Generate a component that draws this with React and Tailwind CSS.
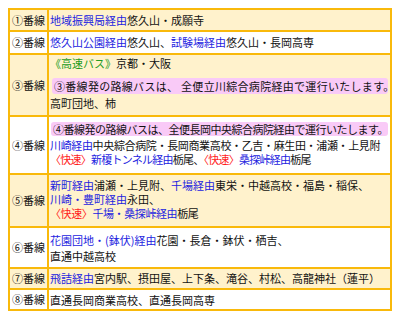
const B = ({ children }) => <span className="text-[#2323e0]">{children}</span>
const R = ({ children }) => <span className="text-[#ff1c1c]">{children}</span>
const G = ({ children }) => <span className="text-[#239b23]">{children}</span>

function Row({ label, yellow, first, height, children }) {
  return (
    <div
      className={`flex ${first ? '' : 'border-t-2'} border-[#f9b90b] ${yellow ? 'bg-[#fff2cc]' : 'bg-white'} ${height}`}
    >
      <div className="w-[39px] shrink-0 border-r-2 border-[#f9b90b] flex items-center pl-[2px] whitespace-nowrap">
        {label}
      </div>
      <div className="flex-1 min-w-0 pl-[1px] whitespace-nowrap">{children}</div>
    </div>
  )
}

export default function App() {
  return (
    <div className="p-2 bg-white min-h-[320px]">
      <div
        className="w-[384px] border-2 border-[#f9b90b] text-[11px] text-[#111]"
        style={{ fontFamily: '"Noto Sans CJK JP", "Noto Sans", sans-serif' }}
      >
        {/* ① */}
        <Row label="①番線" yellow first height="h-[20px]">
          <div className="h-[20px] leading-[20px]">
            <B>地域振興局経由</B>悠久山・成願寺
          </div>
        </Row>

        {/* ② */}
        <Row label="②番線" height="h-[23px]">
          <div className="h-[21px] leading-[21px]">
            <B>悠久山公園経由</B>悠久山、<B>試験場経由</B>悠久山・長岡高専
          </div>
        </Row>

        {/* ③ */}
        <Row label="③番線" yellow height="h-[62px]">
          <div className="h-[16px] leading-[16px]">
            <G>《高速バス》</G>京都・大阪
          </div>
          <div className="mt-[7px] ml-[2px] mr-[2px] h-[16px] leading-[16px] rounded-[3px] bg-[#f9caf7] pl-[2px] tracking-[0.3px]">
            ③番線発の路線バスは、 全便立川綜合病院経由で運行いたします。
          </div>
          <div className="mt-[1px] h-[16px] leading-[16px]">高町団地、柿</div>
        </Row>

        {/* ④ */}
        <Row label="④番線" height="h-[58px]">
          <div className="mt-[5px] ml-[1px] mr-[2px] h-[14px] leading-[14px] rounded-[3px] bg-[#f9caf7] pl-[2px] tracking-[-0.5px]">
            ④番線発の路線バスは、全便長岡中央綜合病院経由で運行いたします。
          </div>
          <div className="mt-[2px] h-[14px] leading-[14px] tracking-[-0.35px]">
            <B>川崎経由</B>中央綜合病院・長岡商業高校・乙吉・麻生田・浦瀬・上見附
          </div>
          <div className="h-[14px] leading-[14px] tracking-[-0.75px]">
            <R>〈快速〉</R><B>新榎トンネル経由</B>栃尾、<R>〈快速〉</R><B>桑探峠経由</B>栃尾
          </div>
        </Row>

        {/* ⑤ */}
        <Row label="⑤番線" yellow height="h-[53px]">
          <div className="mt-[3px] h-[14px] leading-[14px]">
            <B>新町経由</B>浦瀬・上見附、<B>千場経由</B>東栄・中越高校・福島・稲保、
          </div>
          <div className="h-[14px] leading-[14px]">
            <B>川崎・豊町経由</B>永田、
          </div>
          <div className="h-[14px] leading-[14px] tracking-[-0.4px]">
            <R>〈快速〉</R><B>千場・桑探峠経由</B>栃尾
          </div>
        </Row>

        {/* ⑥ */}
        <Row label="⑥番線" height="h-[41px]">
          <div className="mt-[4px] h-[16px] leading-[16px]">
            <B>花園団地・(鉢伏)経由</B>花園・長倉・鉢伏・栖吉、
          </div>
          <div className="h-[16px] leading-[16px]">直通中越高校</div>
        </Row>

        {/* ⑦ */}
        <Row label="⑦番線" yellow height="h-[21px]">
          <div className="h-[19px] leading-[19px]">
            <B>飛詰経由</B>宮内駅、摂田屋、上下条、滝谷、村松、高龍神社（蓮平）
          </div>
        </Row>

        {/* ⑧ */}
        <Row label="⑧番線" height="h-[21px]">
          <div className="pt-[1px] h-[19px] leading-[19px]">直通長岡商業高校、直通長岡高専</div>
        </Row>
      </div>
    </div>
  )
}
